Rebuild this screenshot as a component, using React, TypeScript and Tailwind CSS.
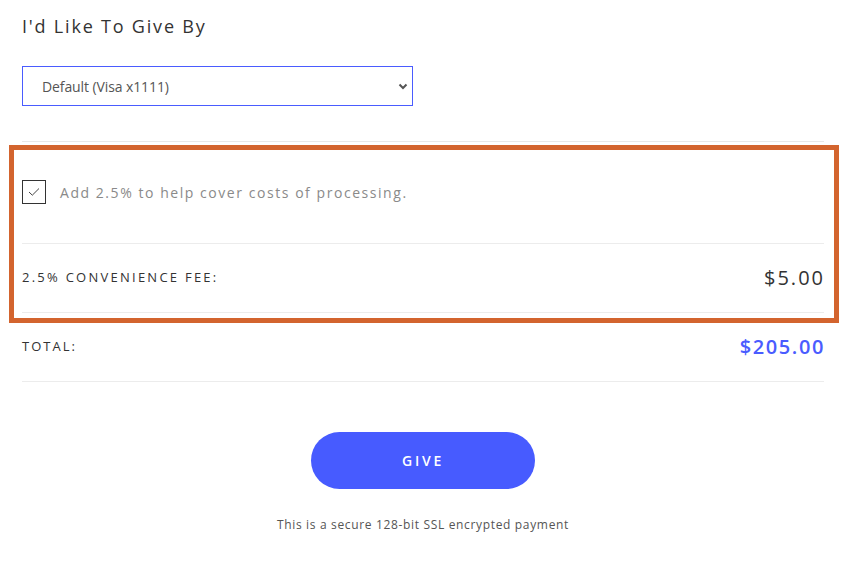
import React from "react";

export default function App() {
  const font = { fontFamily: '"Open Sans", "Noto Sans", sans-serif' };
  return (
    <div className="w-[853px] h-[569px] bg-white overflow-hidden" style={font}>
      <div className="pl-[22px] pr-[29px] pt-[13px]">
        <h1 className="text-[18px] leading-[26px] text-[#333] tracking-[1.8px] font-normal">
          I'd Like To Give By
        </h1>
        <div className="mt-[27px] w-[391px] h-[40px] border border-[#4a5cff] flex items-center justify-between pl-[19px] pr-[4px]">
          <span className="text-[14px] text-[#555] tracking-[-0.1px]">Default (Visa x1111)</span>
          <svg width="10" height="7" viewBox="0 0 10 7">
            <path d="M1.5 1.5 L5 5 L8.5 1.5" fill="none" stroke="#555" strokeWidth="2" />
          </svg>
        </div>
        <div className="mt-[35px] border-t border-[#e8e8e8]" />
        <div className="relative">
          <div className="flex items-center gap-[14px] pt-[38px] pb-[39px] border-b border-[#ececec]">
            <div className="w-[24px] h-[24px] border border-[#333] flex items-center justify-center">
              <svg width="12" height="10" viewBox="0 0 12 10">
                <path d="M1 5 L4.3 8.2 L11 1.5" fill="none" stroke="#444" strokeWidth="1" />
              </svg>
            </div>
            <span className="text-[14px] text-[#8a8a8a] tracking-[1.55px]">
              Add 2.5% to help cover costs of processing.
            </span>
          </div>
          <div className="h-[69px] flex items-center justify-between border-b border-[#ececec]">
            <span className="text-[13px] text-[#333] tracking-[2.25px] uppercase">2.5% Convenience Fee:</span>
            <span className="text-[20px] text-[#333] tracking-[2px] -mr-[1px]">$5.00</span>
          </div>
          <div className="absolute top-[3px] left-[-13px] right-[-15px] bottom-[-10px] border-[5px] border-[#d3642e] pointer-events-none" />
        </div>
        <div className="h-[69px] flex items-center justify-between border-b border-[#ececec]">
          <span className="text-[13px] text-[#333] tracking-[2px] uppercase">Total:</span>
          <span className="text-[20px] text-[#4a5cff] font-semibold tracking-[1.6px] -mr-[1px]">$205.00</span>
        </div>
        <div className="flex flex-col items-center mt-[50px]">
          <button className="w-[224px] h-[57px] rounded-full bg-[#475bff] text-white text-[14px] font-semibold tracking-[2.75px]">
            GIVE
          </button>
          <p className="mt-[27px] text-[12px] text-[#555] tracking-[0.66px]">
            This is a secure 128-bit SSL encrypted payment
          </p>
        </div>
      </div>
    </div>
  );
}
